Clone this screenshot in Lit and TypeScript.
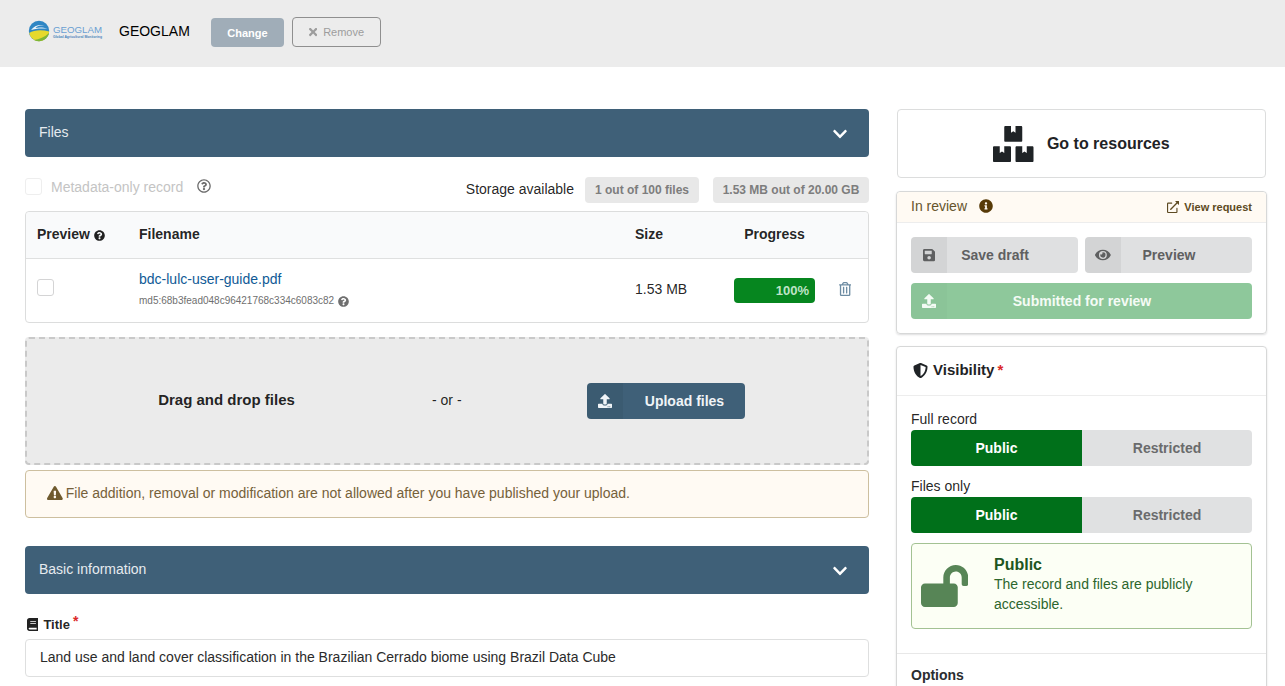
import { LitElement, html, css, svg } from "lit";
import { customElement } from "lit/decorators.js";

const PATHS: Record<string, [number, string]> = {
  upload: [512, "M296 384h-80c-13.3 0-24-10.7-24-24V192h-87.7c-17.8 0-26.7-21.5-14.1-34.1L242.3 5.7c7.5-7.5 19.8-7.5 27.3 0l152.2 152.2c12.6 12.6 3.7 34.1-14.1 34.1H320v168c0 13.3-10.7 24-24 24zm216-8v112c0 13.3-10.7 24-24 24H24c-13.3 0-24-10.7-24-24V376c0-13.3 10.7-24 24-24h136v8c0 30.9 25.1 56 56 56h80c30.9 0 56-25.1 56-56v-8h136c13.3 0 24 10.7 24 24zm-124 88c0-11-9-20-20-20s-20 9-20 20 9 20 20 20 20-9 20-20zm64 0c0-11-9-20-20-20s-20 9-20 20 9 20 20 20 20-9 20-20z"],
  save: [448, "M433.941 129.941l-83.882-83.882A48 48 0 0 0 316.118 32H48C21.49 32 0 53.49 0 80v352c0 26.51 21.49 48 48 48h352c26.51 0 48-21.49 48-48V163.882a48 48 0 0 0-14.059-33.941zM224 416c-35.346 0-64-28.654-64-64 0-35.346 28.654-64 64-64s64 28.654 64 64c0 35.346-28.654 64-64 64zm96-304.52V212c0 6.627-5.373 12-12 12H76c-6.627 0-12-5.373-12-12V108c0-6.627 5.373-12 12-12h228.52c3.183 0 6.235 1.264 8.485 3.515l3.48 3.48A11.996 11.996 0 0 1 320 111.48z"],
  eye: [576, "M572.52 241.4C518.29 135.59 410.93 64 288 64S57.68 135.64 3.48 241.41a32.35 32.35 0 0 0 0 29.19C57.71 376.41 165.07 448 288 448s230.32-71.64 284.52-177.41a32.35 32.35 0 0 0 0-29.19zM288 400a144 144 0 1 1 144-144 143.93 143.93 0 0 1-144 144zm0-240a95.31 95.31 0 0 0-25.31 3.79 47.85 47.85 0 0 1-66.9 66.9A95.78 95.78 0 1 0 288 160z"],
  question: [512, "M504 256c0 136.997-111.043 248-248 248S8 392.997 8 256C8 119.083 119.043 8 256 8s248 111.083 248 248zM262.655 90c-54.497 0-89.255 22.957-116.549 63.758-3.536 5.286-2.353 12.415 2.715 16.258l34.699 26.31c5.205 3.947 12.621 3.008 16.665-2.122 17.864-22.658 30.113-35.797 57.303-35.797 20.429 0 45.698 13.148 45.698 32.958 0 14.976-12.363 22.667-32.534 33.976C247.128 238.528 216 254.941 216 296v4c0 6.627 5.373 12 12 12h56c6.627 0 12-5.373 12-12v-1.333c0-28.462 83.186-29.647 83.186-106.667 0-58.002-60.165-102-116.531-102zM256 338c-25.365 0-46 20.635-46 46 0 25.364 20.635 46 46 46s46-20.636 46-46c0-25.365-20.635-46-46-46z"],
  questionOutline: [512, "M256 8C119.043 8 8 119.083 8 256c0 136.997 111.043 248 248 248s248-111.003 248-248C504 119.083 392.957 8 256 8zm0 448c-110.532 0-200-89.431-200-200 0-110.495 89.472-200 200-200 110.491 0 200 89.471 200 200 0 110.53-89.431 200-200 200zm107.244-255.2c0 67.052-72.421 68.084-72.421 92.863V300c0 6.627-5.373 12-12 12h-45.647c-6.627 0-12-5.373-12-12v-8.659c0-35.745 27.1-50.034 47.579-61.516 17.561-9.845 28.324-16.541 28.324-29.579 0-17.246-21.999-28.693-39.784-28.693-23.189 0-33.894 10.977-48.942 29.969-4.057 5.12-11.46 6.071-16.666 2.124l-27.824-21.098c-5.107-3.872-6.251-11.066-2.644-16.363C184.846 131.491 214.94 112 261.794 112c49.071 0 101.45 38.304 101.45 88.8zM298 368c0 23.159-18.841 42-42 42s-42-18.841-42-42 18.841-42 42-42 42 18.841 42 42z"],
  info: [512, "M256 8C119.043 8 8 119.083 8 256c0 136.997 111.043 248 248 248s248-111.003 248-248C504 119.083 392.957 8 256 8zm0 110c23.196 0 42 18.804 42 42s-18.804 42-42 42-42-18.804-42-42 18.804-42 42-42zm56 254c0 6.627-5.373 12-12 12h-88c-6.627 0-12-5.373-12-12v-24c0-6.627 5.373-12 12-12h12v-64h-12c-6.627 0-12-5.373-12-12v-24c0-6.627 5.373-12 12-12h64c6.627 0 12 5.373 12 12v100h12c6.627 0 12 5.373 12 12v24z"],
  warning: [576, "M569.517 440.013C587.975 472.007 564.806 512 527.94 512H48.054c-36.937 0-59.999-40.055-41.577-71.987L246.423 24.987c18.467-32.009 64.72-31.951 83.154 0l239.94 415.026zM288 354c-25.405 0-46 20.595-46 46s20.595 46 46 46 46-20.595 46-46-20.595-46-46-46zm-43.673-165.346l7.418 136c.347 6.364 5.609 11.346 11.982 11.346h48.546c6.373 0 11.635-4.982 11.982-11.346l7.418-136c.375-6.874-5.098-12.654-11.982-12.654h-63.383c-6.884 0-12.356 5.78-11.981 12.654z"],
  boxes: [576, "M560 288h-80v96l-32-21.3-32 21.3v-96h-80c-8.8 0-16 7.2-16 16v192c0 8.8 7.2 16 16 16h224c8.8 0 16-7.2 16-16V304c0-8.8-7.2-16-16-16zm-384-64h224c8.8 0 16-7.2 16-16V16c0-8.8-7.2-16-16-16h-80v96l-32-21.3L256 96V0h-80c-8.8 0-16 7.2-16 16v192c0 8.8 7.2 16 16 16zm64 64h-80v96l-32-21.3L96 384v-96H16c-8.8 0-16 7.2-16 16v192c0 8.8 7.2 16 16 16h224c8.8 0 16-7.2 16-16V304c0-8.8-7.2-16-16-16z"],
  external: [512, "M432,288H416a16,16,0,0,0-16,16V458a6,6,0,0,1-6,6H54a6,6,0,0,1-6-6V118a6,6,0,0,1,6-6H208a16,16,0,0,0,16-16V80a16,16,0,0,0-16-16H48A48,48,0,0,0,0,112V464a48,48,0,0,0,48,48H400a48,48,0,0,0,48-48V304A16,16,0,0,0,432,288ZM500,0H364a12,12,0,0,0-8.48,20.48l48.19,48.21L131.51,340.89a12,12,0,0,0,0,17l22.63,22.63a12,12,0,0,0,17,0l272.2-272.21,48.21,48.2A12,12,0,0,0,512,148V12A12,12,0,0,0,500,0Z"],
  shield: [512, "M466.5 83.7l-192-80a48.15 48.15 0 0 0-36.9 0l-192 80C27.7 91.1 16 108.6 16 128c0 198.5 114.5 335.7 221.5 380.3 11.8 4.9 25.1 4.9 36.9 0C360.1 472.6 496 349.3 496 128c0-19.4-11.7-36.9-29.5-44.3zM256.1 446.3l-.1-381 175.9 73.3c-3.3 151.4-82.1 261.1-175.8 307.7z"],
  unlock: [576, "M423.5 0C339.5.3 272 69.5 272 153.5V224H48c-26.5 0-48 21.5-48 48v192c0 26.5 21.5 48 48 48h352c26.5 0 48-21.5 48-48V272c0-26.5-21.5-48-48-48h-48v-71.1c0-39.6 31.7-72.5 71.3-72.9 40-.4 72.7 32.1 72.7 72v80c0 13.3 10.7 24 24 24h32c13.3 0 24-10.7 24-24v-80C576 68 507.5-.3 423.5 0z"],
  book: [448, "M448 360V24c0-13.3-10.7-24-24-24H96C43 0 0 43 0 96v320c0 53 43 96 96 96h328c13.3 0 24-10.7 24-24v-16c0-7.5-3.5-14.3-8.9-18.7-4.2-15.4-4.2-59.3 0-74.7 5.4-4.3 8.9-11.1 8.9-18.6zM128 134c0-3.3 2.7-6 6-6h212c3.3 0 6 2.7 6 6v20c0 3.3-2.7 6-6 6H134c-3.3 0-6-2.7-6-6v-20zm0 64c0-3.3 2.7-6 6-6h212c3.3 0 6 2.7 6 6v20c0 3.3-2.7 6-6 6H134c-3.3 0-6-2.7-6-6v-20zm253.4 250H96c-17.7 0-32-14.3-32-32 0-17.6 14.4-32 32-32h285.4c-1.9 17.1-1.9 46.9 0 64z"],
  chevron: [448, "M207.029 381.476L12.686 187.132c-9.373-9.373-9.373-24.569 0-33.941l22.667-22.667c9.357-9.357 24.522-9.375 33.901-.04L224 284.505l154.745-154.021c9.379-9.335 24.544-9.317 33.901.04l22.667 22.667c9.373 9.373 9.373 24.569 0 33.941L240.971 381.476c-9.373 9.372-24.569 9.372-33.942 0z"],
  times: [352, "M242.72 256l100.07-100.07c12.28-12.28 12.28-32.19 0-44.48l-22.24-22.24c-12.28-12.28-32.19-12.28-44.48 0L176 189.28 75.93 89.21c-12.28-12.28-32.19-12.28-44.48 0L9.21 111.45c-12.28 12.28-12.28 32.19 0 44.48L109.28 256 9.21 356.07c-12.28 12.28-12.28 32.19 0 44.48l22.24 22.24c12.28 12.28 32.2 12.28 44.48 0L176 322.72l100.07 100.07c12.28 12.28 32.2 12.28 44.48 0l22.24-22.24c12.28-12.28 12.28-32.19 0-44.48L242.72 256z"],
  trash: [448, "M268 416h24a12 12 0 0 0 12-12V188a12 12 0 0 0-12-12h-24a12 12 0 0 0-12 12v216a12 12 0 0 0 12 12zM432 80h-82.41l-34-56.7A48 48 0 0 0 274.41 0H173.59a48 48 0 0 0-41.16 23.3L98.41 80H16A16 16 0 0 0 0 96v16a16 16 0 0 0 16 16h16v336a48 48 0 0 0 48 48h288a48 48 0 0 0 48-48V128h16a16 16 0 0 0 16-16V96a16 16 0 0 0-16-16zM171.84 50.91A6 6 0 0 1 177 48h94a6 6 0 0 1 5.15 2.91L293.61 80H154.39zM368 464H80V128h288zm-212-48h24a12 12 0 0 0 12-12V188a12 12 0 0 0-12-12h-24a12 12 0 0 0-12 12v216a12 12 0 0 0 12 12z"],
};

// font-awesome style glyph, size is the font size it would have had
const icon = (name: string, size: number) => {
  const [w, d] = PATHS[name];
  const width = (w / 512) * size;
  return html`<svg class="fa" width=${width} height=${size} viewBox="0 0 ${w} 512" fill="currentColor">${svg`<path d=${d}></path>`}</svg>`;
};

@customElement("app-root")
export class AppRoot extends LitElement {
  static styles = css`
    :host {
      display: block;
      height: 686px;
      overflow: hidden;
      background: #fff;
      color: rgba(0, 0, 0, 0.87);
      font-family: "Liberation Sans", Arial, sans-serif;
      font-size: 14px;
      line-height: 20px;
    }
    * { box-sizing: border-box; }
    .fa { display: block; flex: none; }

    .top {
      height: 67px;
      background: #ececec;
      display: flex;
      align-items: center;
      padding: 0 0 6px 28px;
    }
    .logo { display: block; }
    .top-name { color: #000; width: 92px; }
    .btn-change {
      width: 73px; height: 29px; margin: 4px 8px 0 0;
      display: flex; align-items: center; justify-content: center;
      background: #a0adb8; color: #fff; border-radius: 4px;
      font-size: 11px; font-weight: 700;
    }
    .btn-remove {
      width: 89px; height: 30px; margin-top: 3px;
      display: flex; align-items: center; justify-content: center; gap: 6px;
      border: 1px solid #8f8f8f; border-radius: 4px;
      color: #9d9d9d; font-size: 11px;
    }

    .page {
      display: grid;
      grid-template-columns: 844px 371px;
      column-gap: 27px;
      padding: 42px 0 0 25px;
    }
    .bar {
      height: 48px;
      display: flex; align-items: center; justify-content: space-between;
      padding: 0 22px 0 14px;
      background: #3f6078;
      color: #e6ebef;
      border-radius: 4px;
    }
    .bar span { margin-bottom: 2px; }
    .bar .fa { color: #fff; margin-top: 1px; }

    .meta {
      height: 54px;
      display: flex; align-items: center; justify-content: space-between;
      padding-top: 11px;
    }
    .meta-left { display: flex; align-items: center; color: #c4c4c4; margin-top: -5px; }
    .check { width: 17px; height: 17px; border: 1px solid #d4d4d5; border-radius: 3px; background: #fff; }
    .meta-left .check { border-color: #eee; margin-right: 9px; margin-top: -2px; }
    .meta-left .fa { color: #6b6b6b; margin: -2px 0 0 14px; }
    .meta-right { display: flex; align-items: center; }
    .meta-right span { margin: -2px 11px 0 0; }
    .pill {
      height: 26px; width: 114px;
      display: flex; align-items: center; justify-content: center;
      background: #e8e8e8; color: #7d7d7d;
      font-size: 12px; font-weight: 700;
      border-radius: 4px;
    }
    .pill + .pill { margin-left: 14px; width: 156px; }

    .table { border: 1px solid #dcdddd; border-radius: 4px; height: 112px; }
    .tr {
      display: grid;
      grid-template-columns: 102px 496px 99px 81px 1fr;
      padding-left: 11px;
      align-items: center;
    }
    .thead {
      height: 47px; background: #f9fafb; font-weight: 700;
      border-bottom: 1px solid #dfe0e0; border-radius: 4px 4px 0 0;
    }
    .thead > div { margin-bottom: 2px; }
    .th-preview { display: flex; align-items: center; gap: 4px; }
    .th-preview .fa { margin-top: 2px; }
    .center { text-align: center; }
    .tbody { height: 63px; }
    .cell-check { margin-bottom: 6px; }
    .cell-file { margin-bottom: 3px; }
    .cell-size { margin-bottom: 4px; }
    .file-name { color: #0f5a96; line-height: 20px; }
    .md5 { display: flex; align-items: center; gap: 4px; font-size: 10px; color: #6f6f6f; margin-top: 4px; line-height: 16px; }
    .progress {
      height: 25px; padding-right: 6px;
      display: flex; align-items: center; justify-content: flex-end;
      background: #06861f; color: #bfe3c6;
      border-radius: 4px;
      font-size: 13px; font-weight: 700;
    }
    .del { color: #6d8ca3; padding-left: 24px; margin-bottom: 3px; }

    .drop {
      height: 128px;
      margin-top: 14px;
      display: grid;
      grid-template-columns: 399px 161px 1fr;
      align-items: center;
      background: #ebebeb;
      border: 2px dashed #c9c9c9;
      border-radius: 4px;
    }
    .drop-title { font-size: 15px; font-weight: 700; text-align: center; margin-bottom: 2px; }
    .drop-or { padding-left: 6px; margin-bottom: 2px; }
    .btn-upload {
      width: 158px; height: 36px;
      display: flex; align-items: center;
      background: #3f6078; color: #f0f4f7;
      border-radius: 4px; font-weight: 700;
    }
    .btn-upload .box {
      width: 36px; height: 36px; display: flex; align-items: center; justify-content: center;
      background: rgba(0, 0, 0, 0.05); border-radius: 4px 0 0 4px;
    }
    .btn-upload .label { flex: 1; text-align: center; padding-left: 1px; }

    .warn {
      height: 48px;
      margin-top: 5px;
      display: flex; align-items: center; gap: 3px;
      padding: 0 0 2px 21px;
      background: #fffaf3; color: #76613a;
      border: 1px solid #cdbf9f; border-radius: 4px;
    }
    .warn .fa { color: #6f5a2e; }

    .bar.second { margin-top: 28px; }
    .field-label {
      margin-top: 20px; height: 25px; padding-bottom: 4px;
      display: flex; align-items: center; gap: 5px;
      font-size: 13px; font-weight: 700;
    }
    .field-label .fa { margin-left: 2px; }
    .req { color: #db2828; align-self: flex-start; line-height: 16px; margin: -1px 0 0 -2px; font-size: 14px; }
    .input {
      height: 38px;
      display: flex; align-items: center;
      padding: 0 14px 2px;
      border: 1px solid #dedfdf; border-radius: 4px;
      color: #2b2b2b;
    }

    .side { display: flex; flex-direction: column; align-items: stretch; }
    .go {
      height: 69px; margin: 0 1px 13px;
      display: flex; align-items: center; justify-content: center; gap: 13px;
      border: 1px solid #dcdddd; border-radius: 4px;
      font-size: 16px; font-weight: 700; color: #1f2326;
    }
    .card {
      border: 1px solid #d7d8d8; border-radius: 4px;
      box-shadow: 0 1px 2px rgba(34, 36, 38, 0.15);
    }
    .card-head {
      height: 31px;
      display: flex; align-items: center;
      padding: 0 14px 2px;
      background: #fffaf3; color: #66542c;
      border-bottom: 1px solid #ededed;
      border-radius: 4px 4px 0 0;
    }
    .card-head .info { color: #573a08; margin-left: 12px; }
    .view {
      margin: 2px 0 0 auto;
      display: flex; align-items: center; gap: 5px;
      font-size: 11px; font-weight: 700; color: #5d4a22;
    }
    .card-body {
      padding: 14px 14px 14px;
      display: grid; grid-template-columns: 167px 167px; gap: 10px 7px;
    }
    .action {
      height: 36px;
      display: flex; align-items: center;
      background: #dfe0e1; color: #5f6061;
      border-radius: 4px; font-weight: 700;
    }
    .action .box {
      width: 36px; height: 36px; flex: none;
      display: flex; align-items: center; justify-content: center;
      background: rgba(0, 0, 0, 0.05); border-radius: 4px 0 0 4px;
    }
    .action .label { flex: 1; text-align: center; padding-right: 35px; }
    .action.submit { grid-column: 1 / 3; background: #8ec89b; color: #f4fbf5; }
    .action.submit .box { background: rgba(0, 0, 0, 0.015); }

    .vis { margin-top: 12px; height: 360px; }
    .vis-head {
      height: 49px;
      display: flex; align-items: center; gap: 5px;
      padding: 0 16px 2px;
      border-bottom: 1px solid #ededed;
      font-size: 15px; font-weight: 700; color: #1f2326;
    }
    .vis-head .star { color: #db2828; margin-left: -2px; }
    .vis-body { padding: 14px 14px 0; }
    .vis-label { height: 20px; line-height: 19px; }
    .vis-label.next { margin-top: 11px; }
    .toggle { display: grid; grid-template-columns: 171px 170px; height: 36px; font-weight: 700; }
    .toggle div { display: flex; align-items: center; justify-content: center; }
    .toggle .on { background: #00701a; color: #fff; border-radius: 4px 0 0 4px; }
    .toggle .off { background: #e0e1e2; color: #6a6b6c; border-radius: 0 4px 4px 0; }
    .notice {
      height: 86px; margin-top: 10px;
      display: grid; grid-template-columns: 73px 1fr;
      align-items: center;
      padding: 0 9px;
      background: #fcfff5; color: #2c662d;
      border: 1px solid #a3c293; border-radius: 4px;
    }
    .notice .fa { color: #578556; margin-bottom: 1px; }
    .notice-copy { margin-bottom: 3px; }
    .notice-title { font-size: 16px; font-weight: 700; color: #1e561f; line-height: 19px; }
    .notice-text { color: #2c662d; }
    .options {
      margin-top: 24px; padding: 11px 14px 0;
      border-top: 1px solid #e8e8e8;
      font-weight: 700; color: #2a2d30;
    }
  `;

  private logo() {
    return html`<svg class="logo" width="91" height="24" viewBox="0 0 91 24">
      <circle cx="11" cy="12" r="10.2" fill="#2f86c4"></circle>
      <path d="M1.200 14c5-3.500 13-3.500 20-1.500-.6 5.400-5 9.700-10.200 9.700-4.800 0-8.800-3.500-9.800-8.200z" fill="#e6d92c"></path>
      <path d="M6 21c5-.5 11-3 15-7-1 4.500-5 8.200-10 8.200-1.800 0-3.500-.4-5-1.200z" fill="#7fb636"></path>
      <path d="M3 11c3-4 8-6 14-4.500-4-.5-8 .5-9.500 2.500 3-.8 8-.8 12 .8-6-.8-12-.5-16.500 1.200z" fill="#eef5fa"></path>
      <text x="25" y="13.500" font-family="Liberation Sans" font-size="9.700" fill="#6a9fd2">GEOGLAM</text>
      <text x="25" y="19" font-family="Liberation Sans" font-size="4" font-weight="700" fill="#4a83bb" textLength="49" lengthAdjust="spacingAndGlyphs">Global Agricultural Monitoring</text>
    </svg>`;
  }

  render() {
    return html`
      <div class="top">
        ${this.logo()}
        <div class="top-name">GEOGLAM</div>
        <div class="btn-change">Change</div>
        <div class="btn-remove">${icon("times", 12)}Remove</div>
      </div>
      <div class="page">
        <div>
          <div class="bar"><span>Files</span>${icon("chevron", 16)}</div>
          <div class="meta">
            <div class="meta-left">
              <div class="check"></div>Metadata-only record${icon("questionOutline", 14)}
            </div>
            <div class="meta-right">
              <span>Storage available</span>
              <div class="pill">1 out of 100 files</div>
              <div class="pill">1.53 MB out of 20.00 GB</div>
            </div>
          </div>
          <div class="table">
            <div class="tr thead">
              <div class="th-preview">Preview ${icon("question", 11)}</div>
              <div>Filename</div>
              <div>Size</div>
              <div class="center">Progress</div>
              <div></div>
            </div>
            <div class="tr tbody">
              <div class="cell-check"><div class="check"></div></div>
              <div class="cell-file">
                <div class="file-name">bdc-lulc-user-guide.pdf</div>
                <div class="md5">md5:68b3fead048c96421768c334c6083c82 ${icon("question", 11)}</div>
              </div>
              <div class="cell-size">1.53 MB</div>
              <div class="progress">100%</div>
              <div class="del">${icon("trash", 14)}</div>
            </div>
          </div>
          <div class="drop">
            <div class="drop-title">Drag and drop files</div>
            <div class="drop-or">- or -</div>
            <div class="btn-upload">
              <div class="box">${icon("upload", 14)}</div>
              <div class="label">Upload files</div>
            </div>
          </div>
          <div class="warn">
            ${icon("warning", 14)}
            <span>File addition, removal or modification are not allowed after you have published your upload.</span>
          </div>
          <div class="bar second"><span>Basic information</span>${icon("chevron", 16)}</div>
          <div class="field-label">
            ${icon("book", 13)}<span>Title</span><span class="req">*</span>
          </div>
          <div class="input">Land use and land cover classification in the Brazilian Cerrado biome using Brazil Data Cube</div>
        </div>

        <div class="side">
          <div class="go">${icon("boxes", 36)}<span>Go to resources</span></div>
          <div class="card">
            <div class="card-head">
              <span>In review</span>
              <span class="info">${icon("info", 14)}</span>
              <span class="view">${icon("external", 12)}View request</span>
            </div>
            <div class="card-body">
              <div class="action"><div class="box">${icon("save", 14)}</div><div class="label">Save draft</div></div>
              <div class="action"><div class="box">${icon("eye", 14)}</div><div class="label">Preview</div></div>
              <div class="action submit"><div class="box">${icon("upload", 14)}</div><div class="label">Submitted for review</div></div>
            </div>
          </div>
          <div class="card vis">
            <div class="vis-head">${icon("shield", 15)}<span>Visibility</span><span class="star">*</span></div>
            <div class="vis-body">
              <div class="vis-label">Full record</div>
              <div class="toggle"><div class="on">Public</div><div class="off">Restricted</div></div>
              <div class="vis-label next">Files only</div>
              <div class="toggle"><div class="on">Public</div><div class="off">Restricted</div></div>
              <div class="notice">
                ${icon("unlock", 42)}
                <div class="notice-copy">
                  <div class="notice-title">Public</div>
                  <div class="notice-text">The record and files are publicly accessible.</div>
                </div>
              </div>
            </div>
            <div class="options">Options</div>
          </div>
        </div>
      </div>
    `;
  }
}
